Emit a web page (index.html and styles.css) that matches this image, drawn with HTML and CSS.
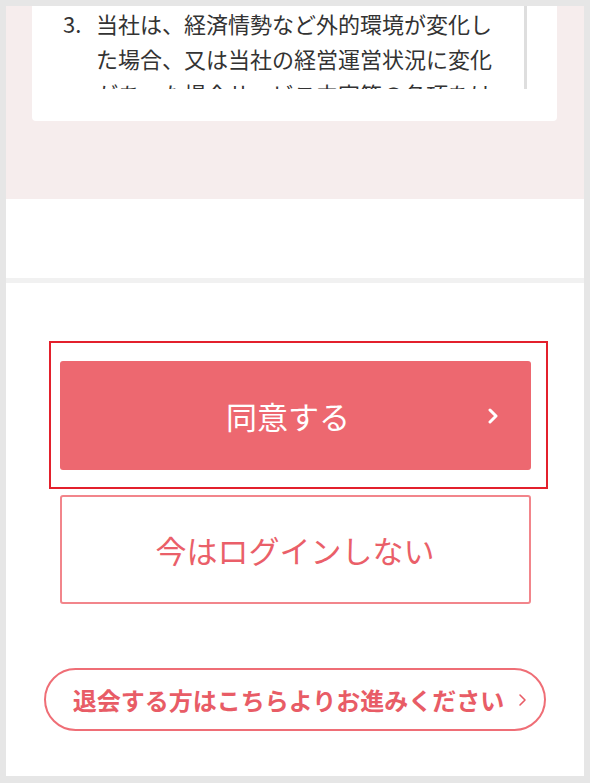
FILE: index.html
```html
<!DOCTYPE html>
<html lang="ja">
<head>
  <meta charset="UTF-8">
  <meta name="viewport" content="width=device-width, initial-scale=1.0">
  <title>利用規約</title>
  <link rel="stylesheet" href="styles.css">
</head>
<body>
  <div class="frame">
    <!-- Terms -->
    <div class="terms">
      <div class="terms-card">
        <div class="terms-scroll">
          <div class="terms-item">
            <span class="terms-num">3.</span>
            <p>当社は、経済情勢など外的環境が変化した場合、又は当社の経営運営状況に変化があった場合サービス内容等の各項をは</p>
          </div>
        </div>
      </div>
    </div>

    <div class="spacer"></div>

    <!-- Actions -->
    <div class="actions">
      <div class="agree-wrap">
        <button class="btn btn-agree">
          同意する
          <svg class="chev" width="10" height="18" viewBox="0 0 10 18"><polyline points="2,3 8,9 2,15" fill="none" stroke="#fff" stroke-width="3" stroke-linecap="round" stroke-linejoin="round"/></svg>
        </button>
        <div class="highlight"></div>
      </div>
      <button class="btn btn-skip">今はログインしない</button>
      <button class="btn-leave">
        退会する方はこちらよりお進みください
        <svg width="9" height="16" viewBox="0 0 9 16"><polyline points="2,3 7,8 2,13" fill="none" stroke="#e85c66" stroke-width="1.6" stroke-linecap="round" stroke-linejoin="round"/></svg>
      </button>
    </div>
  </div>
</body>
</html>
```

FILE: styles.css
```css
body {
  margin: 0;
  padding: 6px 6px 7px;
  background-color: #e6e6e6;
  font-family: "Noto Sans CJK JP", "Noto Sans", sans-serif;
}
.frame {
  background: #fff;
  height: 770px;
  overflow: hidden;
}
.terms {
  background-color: #f6eded;
  padding: 0 27px 78px 26px;
}
.terms-card {
  background: #fff;
  border-radius: 0 0 4px 4px;
  padding-bottom: 32px;
}
.terms-scroll {
  height: 83px;
  overflow: hidden;
  margin-right: 30px;
  border-right: 3px solid #dedede;
}
.terms-item {
  display: flex;
  padding: 0 0 0 31px;
  color: #333;
  font-size: 22px;
  line-height: 35px;
}
.terms-num {
  width: 33px;
  flex-shrink: 0;
}
.terms-item p {
  margin: 0;
  width: 400px;
}
.spacer {
  height: 79px;
  border-bottom: 5px solid #f1f1f1;
}
.actions {
  display: flex;
  flex-direction: column;
  align-items: center;
  padding-top: 78px;
}
.agree-wrap {
  position: relative;
}
.highlight {
  position: absolute;
  top: -20px;
  left: -11px;
  right: -17px;
  bottom: -19px;
  border: 2px solid #e3202c;
  pointer-events: none;
}
.btn {
  display: flex;
  align-items: center;
  justify-content: center;
  width: 471px;
  height: 109px;
  border-radius: 3px;
  font-family: inherit;
  font-size: 31px;
  cursor: pointer;
}
.btn-agree {
  position: relative;
  background-color: #ed6870;
  border: none;
  color: #fff;
  padding-right: 20px;
}
.btn-agree .chev {
  position: absolute;
  right: 33px;
  top: 46px;
}
.btn-skip {
  margin-top: 25px;
  background: #fff;
  border: 2px solid #f2858b;
  color: #ea5f69;
}
.btn-leave {
  display: flex;
  align-items: center;
  justify-content: center;
  gap: 14px;
  margin-top: 64px;
  width: 502px;
  height: 63px;
  background: #fff;
  border: 2px solid #ef6e76;
  border-radius: 32px;
  color: #e85c66;
  font-family: inherit;
  font-size: 24px;
  font-weight: bold;
  padding: 0 0 0 10px;
  cursor: pointer;
}
```
